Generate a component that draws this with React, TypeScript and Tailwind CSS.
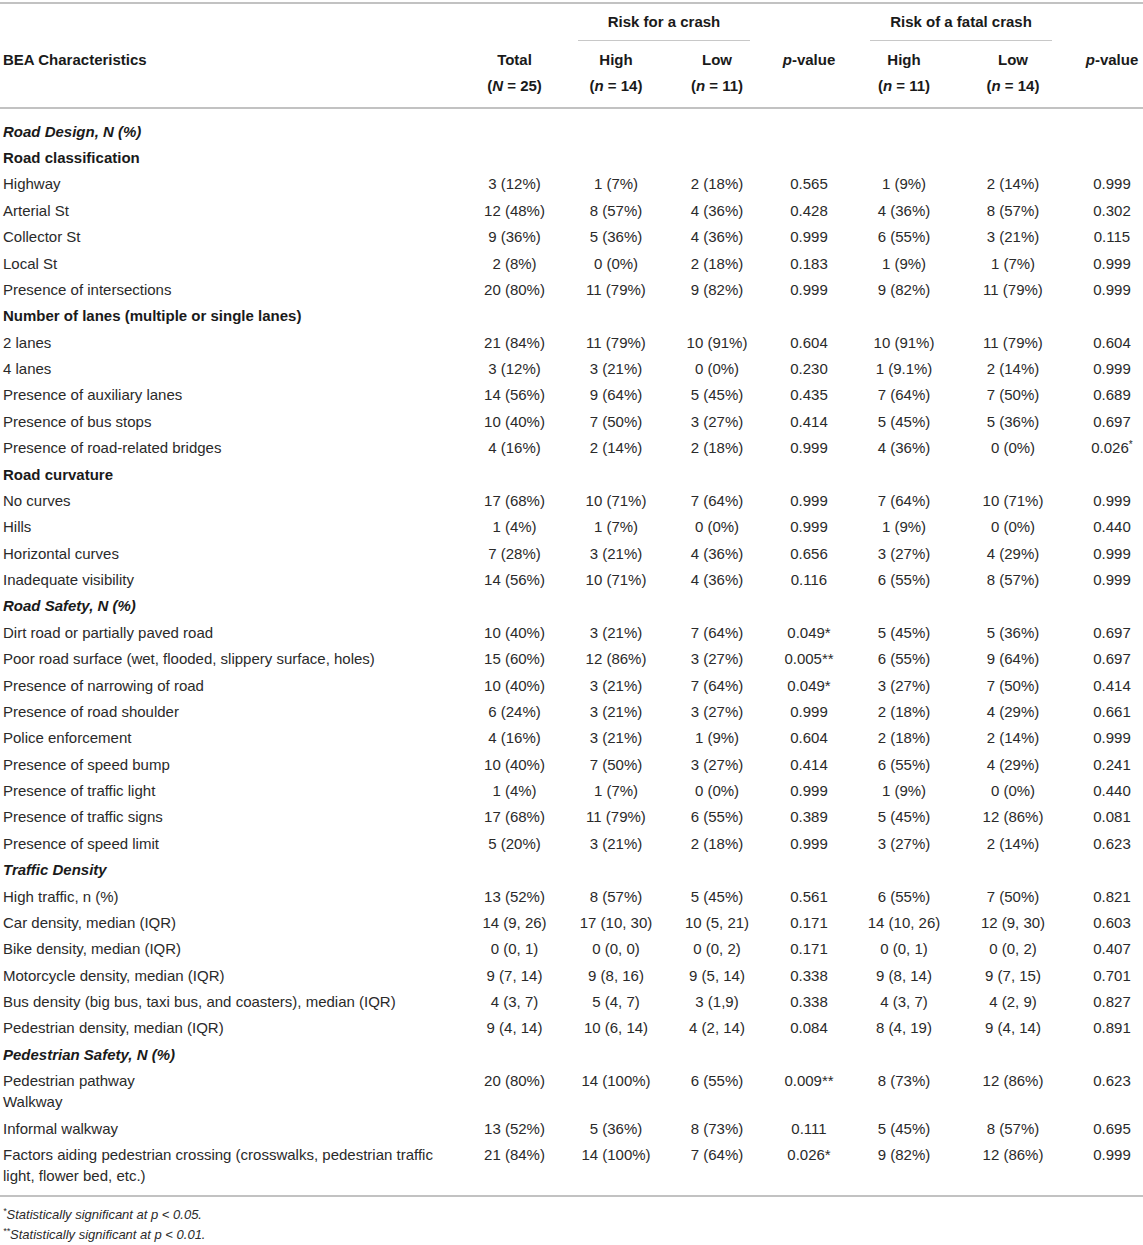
import React from 'react';

type Row =
  | { kind: 'section'; label: string }
  | { kind: 'group'; label: string }
  | { kind: 'data'; label: React.ReactNode; values: string[] };

const GRID = 'grid grid-cols-[464px_101px_102px_100px_84px_106px_112px_74px]';

// renders "0.049*" with the stars raised
function pval(v: string) {
  const m = v.match(/^([^*]+)(\*+)?$/);
  if (!m) return v;
  return (
    <>
      {m[1]}
      {m[2] && <sup className="text-[10px]">{m[2]}</sup>}
    </>
  );
}

const rows: Row[] = [
  { kind: 'section', label: 'Road Design, N (%)' },
  { kind: 'group', label: 'Road classification' },
  { kind: 'data', label: 'Highway', values: ['3 (12%)', '1 (7%)', '2 (18%)', '0.565', '1 (9%)', '2 (14%)', '0.999'] },
  { kind: 'data', label: 'Arterial St', values: ['12 (48%)', '8 (57%)', '4 (36%)', '0.428', '4 (36%)', '8 (57%)', '0.302'] },
  { kind: 'data', label: 'Collector St', values: ['9 (36%)', '5 (36%)', '4 (36%)', '0.999', '6 (55%)', '3 (21%)', '0.115'] },
  { kind: 'data', label: 'Local St', values: ['2 (8%)', '0 (0%)', '2 (18%)', '0.183', '1 (9%)', '1 (7%)', '0.999'] },
  { kind: 'data', label: 'Presence of intersections', values: ['20 (80%)', '11 (79%)', '9 (82%)', '0.999', '9 (82%)', '11 (79%)', '0.999'] },
  { kind: 'group', label: 'Number of lanes (multiple or single lanes)' },
  { kind: 'data', label: '2 lanes', values: ['21 (84%)', '11 (79%)', '10 (91%)', '0.604', '10 (91%)', '11 (79%)', '0.604'] },
  { kind: 'data', label: '4 lanes', values: ['3 (12%)', '3 (21%)', '0 (0%)', '0.230', '1 (9.1%)', '2 (14%)', '0.999'] },
  { kind: 'data', label: 'Presence of auxiliary lanes', values: ['14 (56%)', '9 (64%)', '5 (45%)', '0.435', '7 (64%)', '7 (50%)', '0.689'] },
  { kind: 'data', label: 'Presence of bus stops', values: ['10 (40%)', '7 (50%)', '3 (27%)', '0.414', '5 (45%)', '5 (36%)', '0.697'] },
  { kind: 'data', label: 'Presence of road-related bridges', values: ['4 (16%)', '2 (14%)', '2 (18%)', '0.999', '4 (36%)', '0 (0%)', '0.026*'] },
  { kind: 'group', label: 'Road curvature' },
  { kind: 'data', label: 'No curves', values: ['17 (68%)', '10 (71%)', '7 (64%)', '0.999', '7 (64%)', '10 (71%)', '0.999'] },
  { kind: 'data', label: 'Hills', values: ['1 (4%)', '1 (7%)', '0 (0%)', '0.999', '1 (9%)', '0 (0%)', '0.440'] },
  { kind: 'data', label: 'Horizontal curves', values: ['7 (28%)', '3 (21%)', '4 (36%)', '0.656', '3 (27%)', '4 (29%)', '0.999'] },
  { kind: 'data', label: 'Inadequate visibility', values: ['14 (56%)', '10 (71%)', '4 (36%)', '0.116', '6 (55%)', '8 (57%)', '0.999'] },
  { kind: 'section', label: 'Road Safety, N (%)' },
  { kind: 'data', label: 'Dirt road or partially paved road', values: ['10 (40%)', '3 (21%)', '7 (64%)', '0.049*', '5 (45%)', '5 (36%)', '0.697'] },
  { kind: 'data', label: 'Poor road surface (wet, flooded, slippery surface, holes)', values: ['15 (60%)', '12 (86%)', '3 (27%)', '0.005**', '6 (55%)', '9 (64%)', '0.697'] },
  { kind: 'data', label: 'Presence of narrowing of road', values: ['10 (40%)', '3 (21%)', '7 (64%)', '0.049*', '3 (27%)', '7 (50%)', '0.414'] },
  { kind: 'data', label: 'Presence of road shoulder', values: ['6 (24%)', '3 (21%)', '3 (27%)', '0.999', '2 (18%)', '4 (29%)', '0.661'] },
  { kind: 'data', label: 'Police enforcement', values: ['4 (16%)', '3 (21%)', '1 (9%)', '0.604', '2 (18%)', '2 (14%)', '0.999'] },
  { kind: 'data', label: 'Presence of speed bump', values: ['10 (40%)', '7 (50%)', '3 (27%)', '0.414', '6 (55%)', '4 (29%)', '0.241'] },
  { kind: 'data', label: 'Presence of traffic light', values: ['1 (4%)', '1 (7%)', '0 (0%)', '0.999', '1 (9%)', '0 (0%)', '0.440'] },
  { kind: 'data', label: 'Presence of traffic signs', values: ['17 (68%)', '11 (79%)', '6 (55%)', '0.389', '5 (45%)', '12 (86%)', '0.081'] },
  { kind: 'data', label: 'Presence of speed limit', values: ['5 (20%)', '3 (21%)', '2 (18%)', '0.999', '3 (27%)', '2 (14%)', '0.623'] },
  { kind: 'section', label: 'Traffic Density' },
  { kind: 'data', label: 'High traffic, n (%)', values: ['13 (52%)', '8 (57%)', '5 (45%)', '0.561', '6 (55%)', '7 (50%)', '0.821'] },
  { kind: 'data', label: 'Car density, median (IQR)', values: ['14 (9, 26)', '17 (10, 30)', '10 (5, 21)', '0.171', '14 (10, 26)', '12 (9, 30)', '0.603'] },
  { kind: 'data', label: 'Bike density, median (IQR)', values: ['0 (0, 1)', '0 (0, 0)', '0 (0, 2)', '0.171', '0 (0, 1)', '0 (0, 2)', '0.407'] },
  { kind: 'data', label: 'Motorcycle density, median (IQR)', values: ['9 (7, 14)', '9 (8, 16)', '9 (5, 14)', '0.338', '9 (8, 14)', '9 (7, 15)', '0.701'] },
  { kind: 'data', label: 'Bus density (big bus, taxi bus, and coasters), median (IQR)', values: ['4 (3, 7)', '5 (4, 7)', '3 (1,9)', '0.338', '4 (3, 7)', '4 (2, 9)', '0.827'] },
  { kind: 'data', label: 'Pedestrian density, median (IQR)', values: ['9 (4, 14)', '10 (6, 14)', '4 (2, 14)', '0.084', '8 (4, 19)', '9 (4, 14)', '0.891'] },
  { kind: 'section', label: 'Pedestrian Safety, N (%)' },
  {
    kind: 'data',
    label: (
      <>
        Pedestrian pathway
        <br />
        Walkway
      </>
    ),
    values: ['20 (80%)', '14 (100%)', '6 (55%)', '0.009**', '8 (73%)', '12 (86%)', '0.623'],
  },
  { kind: 'data', label: 'Informal walkway', values: ['13 (52%)', '5 (36%)', '8 (73%)', '0.111', '5 (45%)', '8 (57%)', '0.695'] },
  {
    kind: 'data',
    label: 'Factors aiding pedestrian crossing (crosswalks, pedestrian traffic light, flower bed, etc.)',
    values: ['21 (84%)', '14 (100%)', '7 (64%)', '0.026*', '9 (82%)', '12 (86%)', '0.999'],
  },
];

function TableRow({ row }: { row: Row }) {
  if (row.kind === 'section') {
    return (
      <div className={GRID}>
        <div className="pl-[3px] py-[2.7px] font-bold italic text-[#1a1a1a]">{row.label}</div>
      </div>
    );
  }
  if (row.kind === 'group') {
    return (
      <div className={GRID}>
        <div className="pl-[3px] py-[2.7px] font-bold text-[#1a1a1a] col-span-8">{row.label}</div>
      </div>
    );
  }
  return (
    <div className={GRID}>
      <div className="pl-[3px] pr-2 py-[2.7px] text-[#2a2a2a]">{row.label}</div>
      {row.values.map((v, i) => (
        <div
          key={i}
          className={
            i === 6
              ? 'py-[2.7px] pl-[12px] text-center text-[#2a2a2a] whitespace-nowrap'
              : 'py-[2.7px] text-center text-[#2a2a2a] whitespace-nowrap'
          }
        >
          {i === 2 || i === 5 || i === 6 ? pval(v) : v}
        </div>
      ))}
    </div>
  );
}

export default function App() {
  return (
    <div className="w-[1143px] bg-white text-[15px] leading-[21px] font-['Liberation_Sans',Arial,sans-serif]">
      <div className="mt-[2px] border-t-2 border-[#c2c2c2] border-b-2 pb-[11px]">
        {/* header */}
        <div className={GRID}>
          <div />
          <div />
          <div className="col-span-2 ml-[13px] mr-[17px] pt-[7px] pb-[8px] border-b border-[#c8c8c8] text-center font-bold text-[#1a1a1a]">
            Risk for a crash
          </div>
          <div />
          <div className="col-span-2 ml-[19px] mr-[17px] pt-[7px] pb-[8px] border-b border-[#c8c8c8] text-center font-bold text-[#1a1a1a]">
            Risk of a fatal crash
          </div>
          <div />
        </div>
        <div className={`${GRID} pt-[8px] font-bold text-[#1a1a1a]`}>
          <div className="pl-[3px]">BEA Characteristics</div>
          <div className="text-center">
            Total
            <div className="mt-[5px]">
              (<i>N</i> = 25)
            </div>
          </div>
          <div className="text-center">
            High
            <div className="mt-[5px]">
              (<i>n</i> = 14)
            </div>
          </div>
          <div className="text-center">
            Low
            <div className="mt-[5px]">
              (<i>n</i> = 11)
            </div>
          </div>
          <div className="text-center">
            <i>p</i>-value
          </div>
          <div className="text-center">
            High
            <div className="mt-[5px]">
              (<i>n</i> = 11)
            </div>
          </div>
          <div className="text-center">
            Low
            <div className="mt-[5px]">
              (<i>n</i> = 14)
            </div>
          </div>
          <div className="text-center pl-[12px] whitespace-nowrap">
            <i>p</i>-value
          </div>
        </div>
      </div>

      <div className="pt-[9px] pb-[6px] border-b-2 border-[#c2c2c2]">
        {rows.map((r, i) => (
          <TableRow key={i} row={r} />
        ))}
      </div>

      <div className="pt-[8px] pl-[3px] text-[13px] leading-[20px] italic text-[#2a2a2a]">
        <div>
          <sup className="text-[9px]">*</sup>Statistically significant at p &lt; 0.05.
        </div>
        <div>
          <sup className="text-[9px]">**</sup>Statistically significant at p &lt; 0.01.
        </div>
      </div>
    </div>
  );
}
